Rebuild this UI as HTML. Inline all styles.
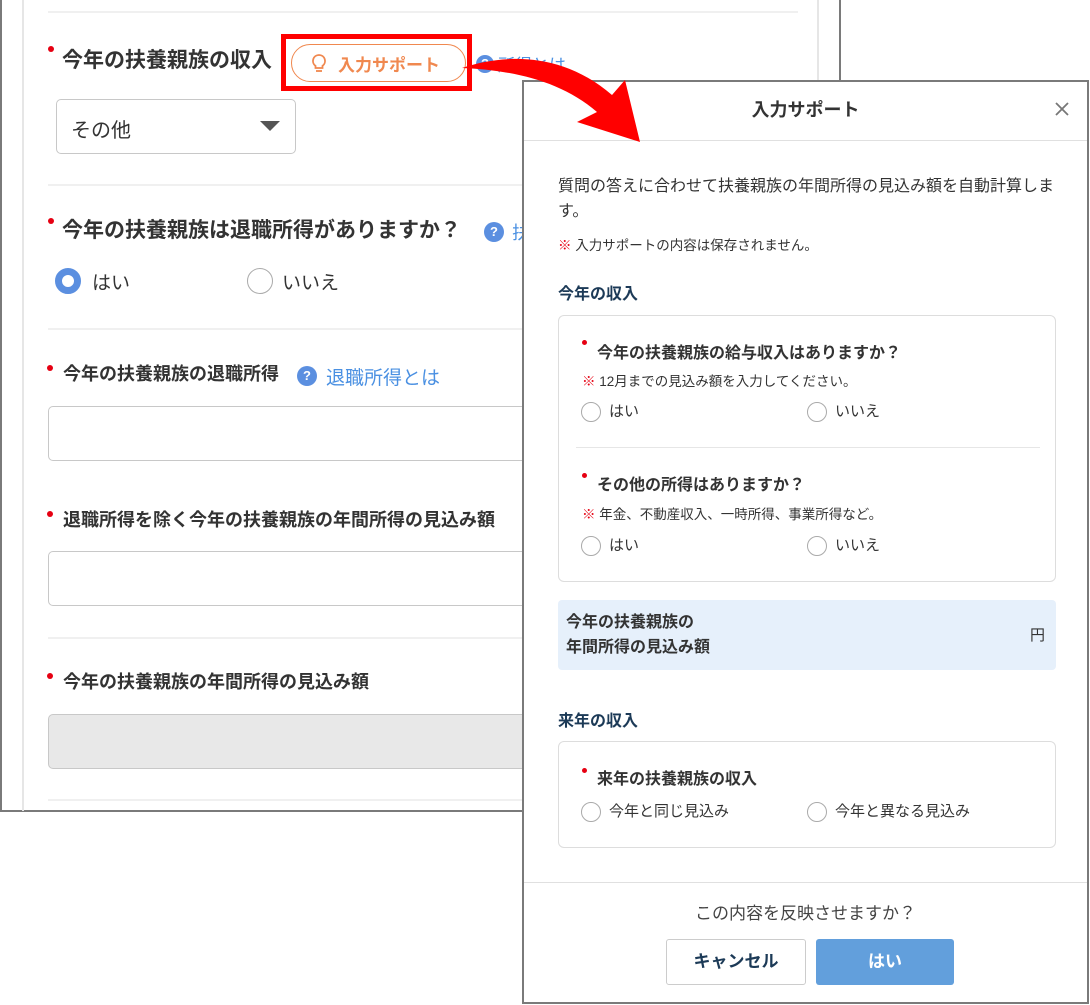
<!DOCTYPE html>
<html><head><meta charset="utf-8"><style>
*{box-sizing:border-box;margin:0;padding:0}
body{width:1090px;height:1005px;background:#fff;position:relative;overflow:hidden;font-family:"Liberation Sans","Noto Sans CJK JP",sans-serif;color:#333}
.a{position:absolute;white-space:nowrap}
.lbl{font-size:18px;font-weight:bold;color:#333;line-height:24px}
.big{font-size:21px;line-height:26px}
.dot{position:absolute;width:6px;height:6px;border-radius:50%;background:#e60012}
.sep{position:absolute;height:2px;background:#f0f0f0}
.inp{position:absolute;border:1px solid #c8c8c8;border-radius:5px;background:#fff}
.q{position:absolute;width:18px;height:18px;border-radius:50%;background:#5b8fe0;color:#fff;font-size:13px;font-weight:bold;text-align:center;line-height:18px}
.rad{position:absolute;border:1px solid #aaa;border-radius:50%;background:#fff}
.m{font-size:16px;line-height:20px;color:#333}
.r{font-size:15px;line-height:20px;color:#333}
.ml{font-size:16px;font-weight:bold;color:#333}
.note{font-size:13.5px;color:#333}
.note b{color:#e60012;font-weight:normal}
.card{position:absolute;border:1px solid #ddd;border-radius:6px;background:#fff}
</style></head><body>
<!-- left panel -->
<div class="a" style="left:0;top:-2px;width:841px;height:814px;border:2px solid #7a7a7a;background:#fff"></div>
<div class="a" style="left:22px;top:0;width:2px;height:811px;background:#e6e6e6"></div>
<div class="a" style="left:817px;top:0;width:2px;height:811px;background:#e6e6e6"></div>
<div class="sep" style="left:48px;top:11px;width:750px"></div>

<div class="dot" style="left:48px;top:46px"></div>
<div class="a lbl big" style="left:62px;top:48px">今年の扶養親族の収入</div>
<div class="a" style="left:281px;top:34px;width:191px;height:57px;border:5px solid #f00"></div>
<div class="a" style="left:291px;top:44px;width:175px;height:38px;border:1.5px solid #f0884f;border-radius:19px"></div>
<svg class="a" style="left:311px;top:53px" width="16" height="22" viewBox="0 0 16 22"><path d="M8 2a6 6 0 0 0-3.5 10.9V15h7v-2.1A6 6 0 0 0 8 2z" fill="none" stroke="#f0884f" stroke-width="1.8"/><path d="M5 18h6" stroke="#f0884f" stroke-width="1.8"/></svg>
<div class="a" style="left:338px;top:51px;font-size:17px;color:#f0884f;font-weight:bold">入力サポート</div>
<div class="q" style="left:476px;top:55px">?</div>
<div class="a" style="left:498px;top:51px;font-size:17px;color:#4a90e2">所得とは</div>

<div class="inp" style="left:56px;top:99px;width:240px;height:55px"></div>
<div class="a" style="left:71px;top:114px;font-size:20px;color:#333">その他</div>
<div class="a" style="left:260px;top:121px;width:0;height:0;border-left:10px solid transparent;border-right:10px solid transparent;border-top:10px solid #555"></div>
<div class="sep" style="left:48px;top:184px;width:770px"></div>

<div class="dot" style="left:48px;top:218px"></div>
<div class="a lbl big" style="left:62px;top:218px">今年の扶養親族は退職所得がありますか？</div>
<div class="q" style="left:484px;top:222px;width:20px;height:20px;line-height:20px">?</div>
<div class="a" style="left:512px;top:219px;font-size:18px;color:#4a90e2">扶</div>
<div class="rad" style="left:55px;top:268px;width:26px;height:26px;border:7px solid #5b8fe0"></div>
<div class="a" style="left:92px;top:268px;font-size:19px">はい</div>
<div class="rad" style="left:247px;top:268px;width:26px;height:26px"></div>
<div class="a" style="left:282px;top:268px;font-size:19px">いいえ</div>
<div class="sep" style="left:48px;top:328px;width:770px"></div>

<div class="dot" style="left:47px;top:365px"></div>
<div class="a lbl" style="left:63px;top:362px">今年の扶養親族の退職所得</div>
<div class="q" style="left:297px;top:366px;width:20px;height:20px;line-height:20px">?</div>
<div class="a" style="left:326px;top:363px;font-size:19px;color:#4a90e2">退職所得とは</div>
<div class="inp" style="left:48px;top:406px;width:500px;height:55px"></div>

<div class="dot" style="left:47px;top:511px"></div>
<div class="a lbl" style="left:63px;top:508px">退職所得を除く今年の扶養親族の年間所得の見込み額</div>
<div class="inp" style="left:48px;top:551px;width:500px;height:55px"></div>
<div class="sep" style="left:48px;top:637px;width:770px"></div>

<div class="dot" style="left:47px;top:673px"></div>
<div class="a lbl" style="left:63px;top:670px">今年の扶養親族の年間所得の見込み額</div>
<div class="inp" style="left:48px;top:714px;width:500px;height:55px;background:#e8e8e8"></div>
<div class="sep" style="left:48px;top:799px;width:770px"></div>

<!-- modal -->
<div class="a" style="left:522px;top:80px;width:567px;height:924px;border:2px solid #7a7a7a;background:#fff"></div>
<div class="a" style="left:524px;top:96px;width:563px;text-align:center;font-size:18px;font-weight:bold;color:#333">入力サポート</div>
<svg class="a" style="left:1054px;top:101px" width="16" height="16"><path d="M2 2L14 14M14 2L2 14" stroke="#777" stroke-width="1.8"/></svg>
<div class="a" style="left:524px;top:140px;width:563px;height:1px;background:#e0e0e0"></div>
<div class="a m" style="left:558px;top:177px">質問の答えに合わせて扶養親族の年間所得の見込み額を自動計算しま</div>
<div class="a m" style="left:558px;top:202px">す。</div>
<div class="a note" style="left:558px;top:234px"><b>※</b> 入力サポートの内容は保存されません。</div>
<div class="a" style="left:558px;top:280px;font-size:16px;font-weight:bold;color:#1c3a57">今年の収入</div>

<div class="card" style="left:558px;top:315px;width:498px;height:267px"></div>
<div class="dot" style="left:582px;top:340px;width:5px;height:5px"></div>
<div class="a ml" style="left:597px;top:339px">今年の扶養親族の給与収入はありますか？</div>
<div class="a note" style="left:582px;top:370px"><b>※</b> 12月までの見込み額を入力してください。</div>
<div class="rad" style="left:581px;top:402px;width:20px;height:20px"></div>
<div class="a r" style="left:609px;top:402px">はい</div>
<div class="rad" style="left:807px;top:402px;width:20px;height:20px"></div>
<div class="a r" style="left:835px;top:402px">いいえ</div>
<div class="a" style="left:576px;top:447px;width:464px;height:1px;background:#e6e6e6"></div>
<div class="dot" style="left:582px;top:473px;width:5px;height:5px"></div>
<div class="a ml" style="left:597px;top:471px">その他の所得はありますか？</div>
<div class="a note" style="left:582px;top:503px"><b>※</b> 年金、不動産収入、一時所得、事業所得など。</div>
<div class="rad" style="left:581px;top:536px;width:20px;height:20px"></div>
<div class="a r" style="left:609px;top:536px">はい</div>
<div class="rad" style="left:807px;top:536px;width:20px;height:20px"></div>
<div class="a r" style="left:835px;top:536px">いいえ</div>

<div class="a" style="left:558px;top:600px;width:498px;height:70px;background:#e6f0fb;border-radius:4px"></div>
<div class="a" style="left:566px;top:610px;font-size:16px;font-weight:bold;line-height:25px">今年の扶養親族の<br>年間所得の見込み額</div>
<div class="a" style="left:1030px;top:624px;font-size:15px">円</div>

<div class="a" style="left:558px;top:707px;font-size:16px;font-weight:bold;color:#1c3a57">来年の収入</div>
<div class="card" style="left:558px;top:741px;width:498px;height:107px"></div>
<div class="dot" style="left:582px;top:768px;width:5px;height:5px"></div>
<div class="a ml" style="left:597px;top:765px">来年の扶養親族の収入</div>
<div class="rad" style="left:581px;top:802px;width:20px;height:20px"></div>
<div class="a r" style="left:609px;top:802px">今年と同じ見込み</div>
<div class="rad" style="left:807px;top:802px;width:20px;height:20px"></div>
<div class="a r" style="left:835px;top:802px">今年と異なる見込み</div>

<div class="a" style="left:524px;top:882px;width:563px;height:1px;background:#e0e0e0"></div>
<div class="a" style="left:524px;top:899px;width:563px;text-align:center;font-size:17px;color:#444">この内容を反映させますか？</div>
<div class="a" style="left:666px;top:939px;width:140px;height:46px;border:1px solid #ccc;border-radius:3px;text-align:center;line-height:44px;font-size:17px;font-weight:bold;color:#1c3a57">キャンセル</div>
<div class="a" style="left:816px;top:939px;width:138px;height:46px;background:#629fdc;border-radius:3px;text-align:center;line-height:46px;font-size:17px;font-weight:bold;color:#fff">はい</div>

<!-- red arrow -->
<svg class="a" style="left:0;top:0" width="1090" height="200" viewBox="0 0 1090 200">
<path d="M462 68 C500 55 560 50 612 95 L625 80 L640 142 L577 122 L597 112 C560 80 510 70 462 68 Z" fill="#f00"/>
</svg>
</body></html>
